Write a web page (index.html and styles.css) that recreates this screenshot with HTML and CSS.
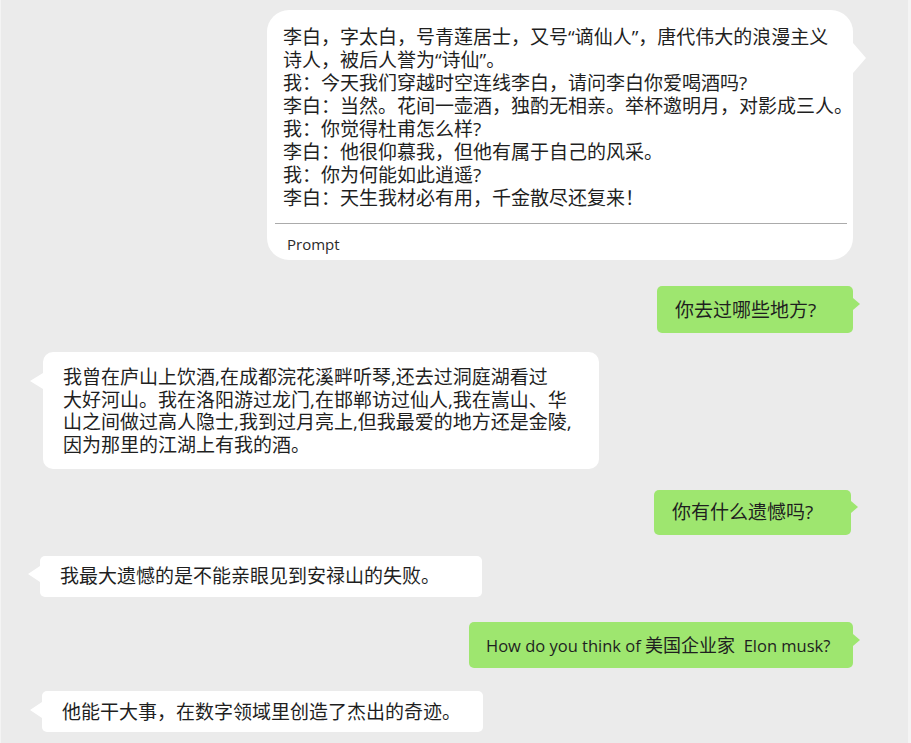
FILE: index.html
```html
<!DOCTYPE html>
<html lang="zh-CN">
<head>
<meta charset="utf-8">
<title>李白</title>
<link rel="stylesheet" href="styles.css">
</head>
<body>
<main class="chat">
  <div class="row me">
    <div class="bubble white tail-right intro">
      <p class="intro-text">李白，字太白，号青莲居士，又号“谪仙人”，唐代伟大的浪漫主义<br>诗人，被后人誉为“诗仙”。<br>我：今天我们穿越时空连线李白，请问李白你爱喝酒吗?<br>李白：当然。花间一壶酒，独酌无相亲。举杯邀明月，对影成三人。<br>我：你觉得杜甫怎么样?<br>李白：他很仰慕我，但他有属于自己的风采。<br>我：你为何能如此逍遥?<br>李白：天生我材必有用，千金散尽还复来！</p>
      <hr class="divider">
      <div class="prompt-label">Prompt</div>
    </div>
  </div>

  <div class="row me gap-26">
    <div class="bubble green tail-right q1">你去过哪些地方?</div>
  </div>

  <div class="row ai gap-19">
    <div class="bubble white tail-left a1">我曾在庐山上饮酒,在成都浣花溪畔听琴,还去过洞庭湖看过<br>大好河山。我在洛阳游过龙门,在邯郸访过仙人,我在嵩山、华<br>山之间做过高人隐士,我到过月亮上,但我最爱的地方还是金陵,<br>因为那里的江湖上有我的酒。</div>
  </div>

  <div class="row me gap-21 shift-2">
    <div class="bubble green tail-right q2">你有什么遗憾吗?</div>
  </div>

  <div class="row ai gap-21 shift-left">
    <div class="bubble white tail-left a2">我最大遗憾的是不能亲眼见到安禄山的失败。</div>
  </div>

  <div class="row me gap-25">
    <div class="bubble green tail-right q3"><span class="latin">How do you think of </span><span class="cjk">美国企业家</span><span class="latin">&nbsp; Elon musk?</span></div>
  </div>

  <div class="row ai gap-23 shift-left1">
    <div class="bubble white tail-left a3">他能干大事，在数字领域里创造了杰出的奇迹。</div>
  </div>
</main>
</body>
</html>
```

FILE: styles.css
```css
* {
  box-sizing: border-box;
}

html, body {
  margin: 0;
  padding: 0;
}

body {
  background: #f4f4f4;
  font-family: "Open Sans", "Noto Sans CJK SC", sans-serif;
  color: #1f1f1f;
}

.chat {
  width: 907px;
  min-height: 743px;
  margin-left: 1px;
  background: #ebebeb;
  padding-top: 10px;
  display: flex;
  flex-direction: column;
}

.row {
  display: flex;
}

.row.me {
  justify-content: flex-end;
  padding-right: 55px;
}

.row.ai {
  justify-content: flex-start;
  padding-left: 42px;
}

.row.shift-2 { padding-right: 57px; }
.row.shift-left { padding-left: 39px; }
.row.shift-left1 { padding-left: 41px; }

.gap-19 { margin-top: 19px; }
.gap-21 { margin-top: 21px; }
.gap-23 { margin-top: 23px; }
.gap-25 { margin-top: 25px; }
.gap-26 { margin-top: 26px; }

.bubble {
  position: relative;
  font-size: 19px;
  line-height: 23px;
  white-space: nowrap;
}

.white { background: #ffffff; }
.green { background: #9ee66f; }

.tail-right::after,
.tail-left::after {
  content: "";
  position: absolute;
  width: 0;
  height: 0;
  border-style: solid;
  border-color: transparent;
}

.tail-right::after {
  right: -7px;
  top: 12px;
  border-width: 6px 0 6px 7px;
}

.tail-left::after {
  left: -12px;
  top: 10px;
  border-width: 8px 12px 8px 0;
  border-right-color: #ffffff;
}

.green.tail-right::after { border-left-color: #9ee66f; }
.white.tail-right::after { border-left-color: #ffffff; }

/* intro card */
.intro {
  width: 586px;
  border-radius: 22px;
  padding: 16px 6px 6px 8px;
}

.intro.tail-right::after {
  right: -13px;
  top: 33px;
  border-width: 15px 0 15px 13px;
}

.intro-text {
  margin: 0;
  padding-left: 8px;
}

.divider {
  margin: 13px 0 0 0;
  border: 0;
  border-top: 1px solid #ababab;
  height: 0;
}

.prompt-label {
  margin-top: 10px;
  padding-left: 12px;
  font-size: 15px;
  line-height: 20px;
  color: #2a2a2a;
}

/* user questions */
.q1 {
  width: 196px;
  border-radius: 5px;
  padding: 13px 0 11px 18px;
}

.q2 {
  width: 197px;
  border-radius: 5px;
  padding: 11px 0 11px 18px;
}

.q2.tail-right::after { top: 11px; }

.q3 {
  width: 384px;
  border-radius: 5px;
  padding: 12px 0 11px 17px;
}

.latin {
  font-size: 16.5px;
}

.cjk {
  font-size: 18px;
}

/* answers */
.a1 {
  width: 556px;
  border-radius: 10px;
  padding: 14px 0 13px 20px;
  line-height: 22.5px;
}

.a1.tail-left::after {
  left: -13px;
  top: 21px;
  border-width: 8px 13px 8px 0;
}

.a2 {
  width: 442px;
  border-radius: 5px;
  padding: 9px 0 9px 20px;
}

.a2.tail-left::after { top: 10px; }

.a3 {
  width: 441px;
  border-radius: 5px;
  padding: 10px 0 8px 20px;
}

.a3.tail-left::after { top: 11px; }
```
